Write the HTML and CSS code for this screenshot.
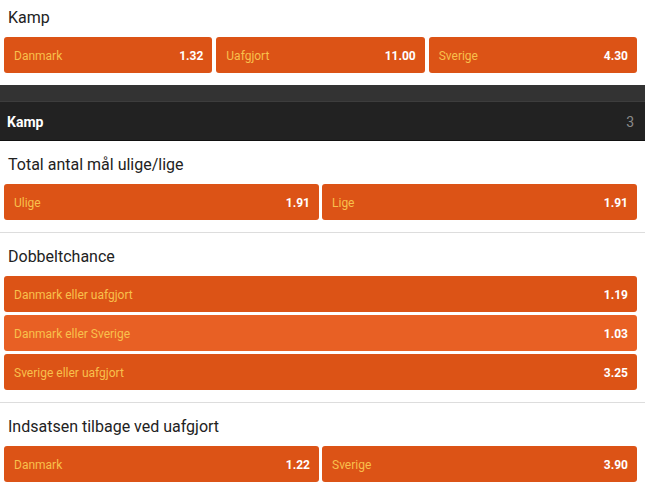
FILE: index.html
```html
<!DOCTYPE html>
<html lang="da">
<head>
<meta charset="utf-8">
<title>Kamp</title>
<link rel="stylesheet" href="styles.css">
</head>
<body>
<section class="market market-first">
  <h2 class="market-title">Kamp</h2>
  <div class="outcomes cols-3">
    <div class="outcome"><span class="label">Danmark</span><span class="odds">1.32</span></div>
    <div class="outcome"><span class="label">Uafgjort</span><span class="odds">11.00</span></div>
    <div class="outcome"><span class="label">Sverige</span><span class="odds">4.30</span></div>
  </div>
</section>
<div class="group-spacer"></div>
<header class="group-header">
  <span class="group-name">Kamp</span>
  <span class="group-count">3</span>
</header>
<section class="market">
  <h2 class="market-title">Total antal mål ulige/lige</h2>
  <div class="outcomes cols-2">
    <div class="outcome"><span class="label">Ulige</span><span class="odds">1.91</span></div>
    <div class="outcome"><span class="label">Lige</span><span class="odds">1.91</span></div>
  </div>
</section>
<section class="market market-sep">
  <h2 class="market-title">Dobbeltchance</h2>
  <div class="outcomes cols-1">
    <div class="outcome"><span class="label">Danmark eller uafgjort</span><span class="odds">1.19</span></div>
    <div class="outcome hover"><span class="label">Danmark eller Sverige</span><span class="odds">1.03</span></div>
    <div class="outcome"><span class="label">Sverige eller uafgjort</span><span class="odds">3.25</span></div>
  </div>
</section>
<section class="market market-sep">
  <h2 class="market-title">Indsatsen tilbage ved uafgjort</h2>
  <div class="outcomes cols-2">
    <div class="outcome"><span class="label">Danmark</span><span class="odds">1.22</span></div>
    <div class="outcome"><span class="label">Sverige</span><span class="odds">3.90</span></div>
  </div>
</section>
</body>
</html>
```
FILE: styles.css
```css
html, body {
  margin: 0;
  padding: 0;
  background: #ffffff;
  font-family: Roboto, "Liberation Sans", Arial, sans-serif;
}

.market {
  padding: 0 8px 12px 4px;
}

.market-sep {
  border-top: 1px solid #dddddd;
}

.market-title {
  margin: 0;
  padding: 13px 4px 9px 4px;
  font-size: 16px;
  font-weight: 400;
  line-height: 21px;
  color: #222222;
}

.market-first .market-title {
  padding-top: 7px;
}

.outcomes {
  display: grid;
}

.cols-3 {
  grid-template-columns: repeat(3, 1fr);
  gap: 4px;
}

.cols-2 {
  grid-template-columns: repeat(2, 1fr);
  gap: 3px;
}

.cols-1 {
  grid-template-columns: 1fr;
  gap: 3px;
}

.outcome {
  height: 36px;
  display: flex;
  align-items: center;
  justify-content: space-between;
  padding: 1px 9px 0 10px;
  box-sizing: border-box;
  background: #dc5316;
  border-radius: 3px;
  font-size: 12px;
}

.outcome.hover {
  background: #e86024;
}

.label {
  color: #f8c04c;
}

.odds {
  color: #ffffff;
  font-weight: 700;
}

.group-spacer {
  height: 16px;
  background: #333333;
}

.group-header {
  height: 38px;
  display: flex;
  align-items: center;
  justify-content: space-between;
  padding: 1px 11px 0 7px;
  box-sizing: border-box;
  height: 40px;
  background: #222222;
  border-top: 1px solid #3d3d3d;
  border-bottom: 1px solid #111111;
  font-size: 14px;
}

.group-name {
  color: #ffffff;
  font-weight: 700;
}

.group-count {
  color: #8a8a8a;
}
```
